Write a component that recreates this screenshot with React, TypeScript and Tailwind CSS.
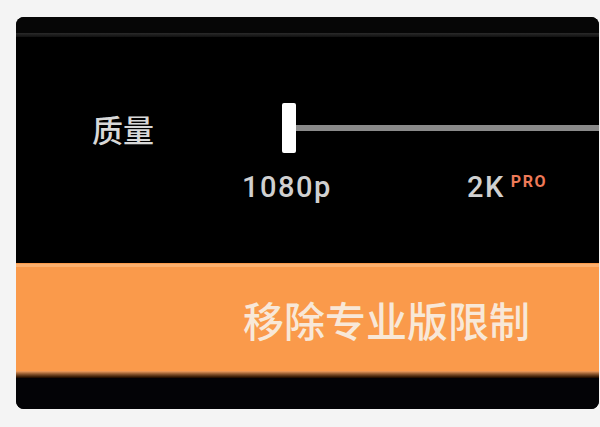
export default function App() {
  const cjk = { fontFamily: '"Noto Sans CJK SC", "Noto Sans", sans-serif' };
  const latin = { fontFamily: 'Roboto, "Liberation Sans", Arial, sans-serif' };

  return (
    <div className="w-[600px] h-[427px] bg-[#f4f4f4] pt-[17px] pl-[16px] overflow-hidden">
      <div className="w-[583px] h-[392px] rounded-[8px] bg-black overflow-hidden flex flex-col">
        <div className="h-[16px] bg-[#060606]" />
        <div className="h-[4px] bg-gradient-to-b from-[#2a2a2a] to-[#111111]" />

        <div className="h-[226px] flex flex-col pt-[66px]">
          <div className="h-[50px] flex items-center">
            <div className="w-[266px] pl-[76px] text-[31px] leading-none font-medium text-[#d8d8d8]" style={cjk}>
              质量
            </div>
            <div className="w-[14px] h-[50px] bg-white rounded-[2px]" />
            <div className="flex-1 h-[6px] bg-[#8a8a8a]" />
          </div>

          <div className="mt-[20px] flex items-start pl-[226px] text-[29px] leading-none font-medium text-[#d0d0d0] tracking-[1.5px]" style={latin}>
            <div className="w-[225px]">1080p</div>
            <div className="flex items-start">
              <span>2K</span>
              <span className="ml-[6px] mt-[1px] text-[16px] font-bold text-[#ee7a58] tracking-[1.5px]">PRO</span>
            </div>
          </div>
        </div>

        <div className="h-[115px] bg-[#fa9a4b] flex flex-col">
          <div className="h-[3px] mt-[1px] bg-[#fcb06e]" />
          <div className="flex-1 flex items-center pl-[227px]">
            <span className="text-[41px] leading-none font-medium text-[#f8e8d8]" style={cjk}>
              移除专业版限制
            </span>
          </div>
          <div className="h-[7px] bg-gradient-to-b from-[#f5a060] to-[#1a0800]" />
        </div>

        <div className="h-[31px] bg-[#030306]" />
      </div>
    </div>
  );
}
